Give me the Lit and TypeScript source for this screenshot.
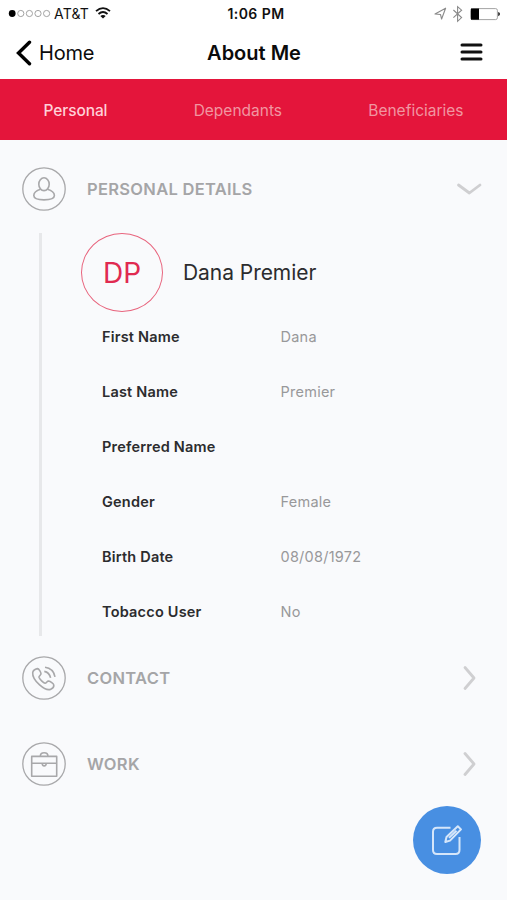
import { LitElement, html, css, svg, nothing } from "lit";
import { customElement, property } from "lit/decorators.js";

const glyphs = {
  person: svg`<ellipse cx="22" cy="17.2" rx="5.2" ry="6.4"/><path d="M18.6 22.3C15 23.4 11.8 25.5 11.8 28.6C11.8 31.6 15.5 32.9 22 32.9C28.5 32.9 32.4 31.6 32.4 28.6C32.4 25.5 29 23.4 25.4 22.3"/>`,
  phone: svg`<path d="M15.4 12.6C13.2 13.1 11 14.6 10.7 16.6C10.4 20 13.2 25 17.6 28.9C21.6 32.4 26 34.5 28.8 33.2C30.6 32.4 32 30.5 31.8 29C31.6 27.7 28.4 25.4 26.6 25C25 24.8 24.4 27.4 23 27.2C21.4 26.8 17.6 23.2 17 21.3C16.7 20 19 19.1 19 17.7C18.9 16.2 17 12.5 15.4 12.6Z"/><path d="M22.3 15.4C25.4 16 27.8 18.4 28.6 21.9"/><path d="M23 11.3C28 11.9 32 15.6 33 20.9"/>`,
  case: svg`<path d="M9.7 14.4H34.7V34.2H9.7ZM9.7 21.3H34.7M18.3 14.4C18.3 9.6 26 9.6 26 14.4M20.2 21.5C20.2 24.6 24.2 24.6 24.2 21.5"/>`,
};

@customElement("section-header")
class SectionHeader extends LitElement {
  @property() icon: keyof typeof glyphs = "person";
  @property() label = "";
  @property({ type: Boolean }) open = false;
  static styles = css`
    :host { display: flex; align-items: center; height: 44px; padding: 0 24px 0 22px; }
    svg { display: block; fill: none; stroke: #a8a8aa; stroke-width: 1.6; stroke-linejoin: round; }
    .ring { stroke-width: 1.3; }
    .title { flex: 1; margin-left: 21px; font-size: 16.5px; font-weight: 600; color: #a5a5a7; letter-spacing: 0.3px; }
    .arrow { stroke: #cfcfd1; stroke-width: 2.8; stroke-linecap: round; }
  `;
  render() {
    return html`<svg width="44" height="44"><circle class="ring" cx="22" cy="22" r="21.2"/>${glyphs[this.icon]}</svg>
      <span class="title">${this.label}</span>
      <svg class="arrow" width="28" height="28"><path d=${this.open ? "M3.5 10L14.4 18L25 10" : "M10 3.5L19 14L10 24.5"}/></svg>`;
  }
}

@customElement("app-root")
class AppRoot extends LitElement {
  static styles = css`
    :host { display: block; height: 900px; overflow: hidden; background: #f9fafc; font-family: Inter, "Liberation Sans", sans-serif; color: #2c2c2e; position: relative; }
    svg { display: block; fill: none; }
    .status, .nav { display: grid; grid-template-columns: 1fr auto 1fr; align-items: center; background: #fff; }
    .status { height: 27px; color: #111; }
    .carrier { display: flex; align-items: center; padding-left: 8px; font-size: 14px; }
    .carrier span { margin: 0 6px 0 3px; letter-spacing: 0.2px; }
    .time { font-size: 14px; font-weight: 600; letter-spacing: 0.45px; padding-left: 5px; }
    .indicators { display: flex; align-items: center; justify-content: flex-end; }
    .nav { height: 52px; color: #0b0b0b; }
    .back { display: flex; align-items: center; gap: 6px; padding-left: 15px; font-size: 20px; letter-spacing: -0.2px; }
    .heading { font-size: 20px; font-weight: 600; padding-left: 1px; }
    .menu { justify-self: end; margin: 0 24px 2px 0; }
    .tabs { display: flex; height: 61px; background: #e4153b; color: #f196a1; font-size: 15.5px; align-items: center; justify-content: space-between; padding: 1px 43.5px 0; box-sizing: border-box; }
    .active { color: #ffd0d8; font-weight: 500; letter-spacing: -0.1px; }
    .sections { padding-top: 27px; }
    .details { margin: 22px 0 20px 39px; border-left: 3px solid #e7e8ea; height: 403px; box-sizing: border-box; }
    .person { display: flex; align-items: center; margin-left: 39px; gap: 20px; font-size: 21px; letter-spacing: -0.05px; }
    .avatar { width: 82px; height: 79px; box-sizing: border-box; border: 1.9px solid #e8647d; border-radius: 50%; display: flex; align-items: center; justify-content: center; color: #e02a50; font-size: 28px; }
    dl { margin: -3px 0 0 60px; display: grid; grid-template-columns: 178.5px 1fr; grid-auto-rows: 55px; align-items: center; font-size: 14.5px; letter-spacing: 0.2px; }
    dt { font-weight: 600; }
    dd { margin: 0; color: #98989a; letter-spacing: 0.25px; }
    .work { margin-top: 41.5px; }
    .fab { position: absolute; left: 413px; top: 806px; width: 68px; height: 68px; border-radius: 50%; background: #488fe2; }
  `;
  fields = [
    ["First Name", "Dana"],
    ["Last Name", "Premier"],
    ["Preferred Name", ""],
    ["Gender", "Female"],
    ["Birth Date", "08/08/1972"],
    ["Tobacco User", "No"],
  ];
  render() {
    return html`
      <div class="status">
        <div class="carrier">
          <svg width="43" height="12" stroke="#999" stroke-width=".9"><circle cx="4.2" cy="5.5" r="3.4" fill="#000" stroke="none"/>${[12.8, 21.4, 30, 38.6].map((x) => svg`<circle cx=${x} cy="5.5" r="3.1"/>`)}</svg>
          <span>AT&amp;T</span>
          <svg width="16" height="13" stroke="#111" stroke-width="1.8"><path d="M1 4.2Q8 -2 15 4.2M3.5 7Q8 3 12.5 7"/><path d="M5.3 9Q8 6.8 10.7 9L8 11.6Z" fill="#111" stroke="none"/></svg>
        </div>
        <div class="time">1:06 PM</div>
        <div class="indicators">
          <svg width="73" height="18" viewBox="0 0 73 18"><path d="M1 9L11.6 3.2L7.6 14L6.5 9.5Z" stroke="#8a8a8a" stroke-width="1.1" stroke-linejoin="round"/><path d="M19.4 5L27.6 12.6L23.6 16.3V1.7L27.6 5.2L19.4 12.6" stroke="#8a8a8a" stroke-width="1.1"/><rect x="36.6" y="3.6" width="26.8" height="11" rx="1.8" stroke="#999" stroke-width=".9"/><path d="M37 3.5H45V14.7H37Z" fill="#000"/><path d="M64.2 7Q66 7.5 66 9.1T64.2 11.3Z" fill="#222"/></svg>
        </div>
      </div>
      <div class="nav">
        <div class="back"><svg width="18" height="26" stroke="#000" stroke-width="3.4" stroke-linecap="round"><path d="M14.5 2.2L3.5 13L14.5 23.8"/></svg>Home</div>
        <div class="heading">About Me</div>
        <svg class="menu" width="23" height="20" stroke="#111" stroke-width="3" stroke-linecap="round"><path d="M2 3H21M2 10H21M2 17H21"/></svg>
      </div>
      <div class="tabs"><span class="active">Personal</span><span>Dependants</span><span>Beneficiaries</span></div>
      <div class="sections">
        <section-header icon="person" label="PERSONAL DETAILS" open></section-header>
        <div class="details">
          <div class="person"><div class="avatar">DP</div>Dana Premier</div>
          <dl>${this.fields.map(([k, v]) => html`<dt>${k}</dt><dd>${v || nothing}</dd>`)}</dl>
        </div>
        <section-header icon="phone" label="CONTACT"></section-header>
        <section-header class="work" icon="case" label="WORK"></section-header>
      </div>
      <svg class="fab" viewBox="0 0 68 68" stroke="#d5e6fa" stroke-width="2" stroke-linejoin="round"><path d="M37.5 21.7H24Q20 21.7 20 25.7V44Q20 48 24 48H42.5Q46.5 48 46.5 44V31"/><path d="M32.3 36L33.5 31L44.8 20.2L48 23.4L37 34.6ZM36 31.9L43.5 24.7"/></svg>
    `;
  }
}
